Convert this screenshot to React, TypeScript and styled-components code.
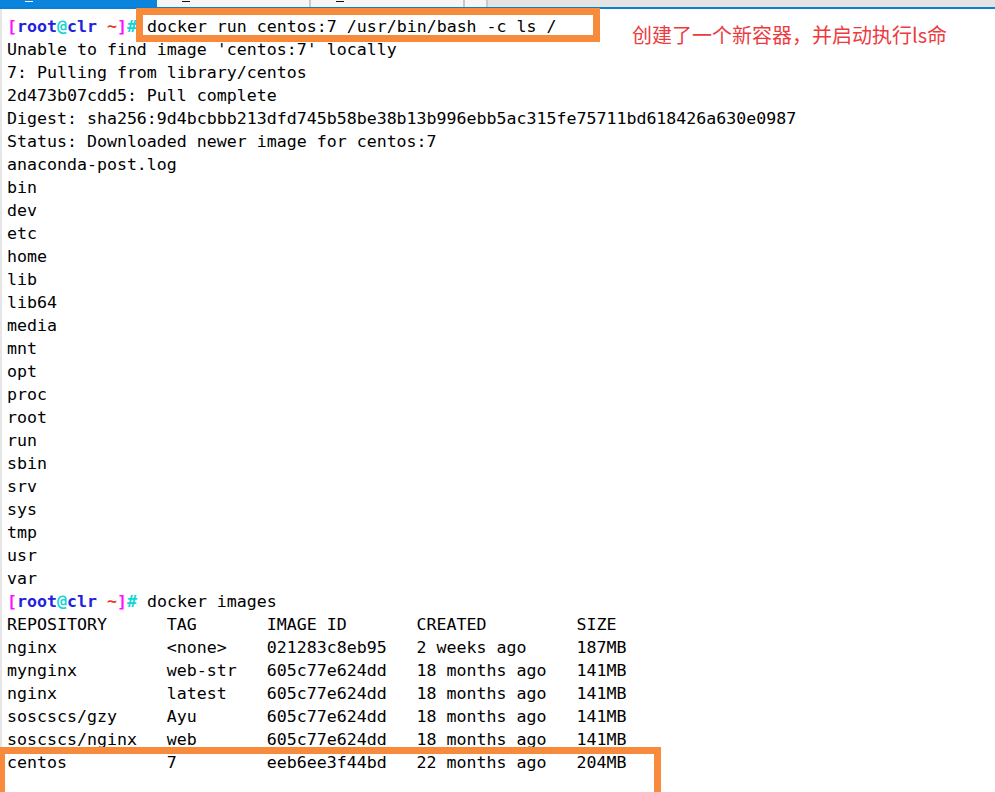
import React from 'react';
import styled, { createGlobalStyle } from 'styled-components';

const GlobalStyle = createGlobalStyle`
  html, body {
    margin: 0;
    padding: 0;
    background: #ffffff;
    overflow: hidden;
  }
`;

const Screen = styled.div`
  position: relative;
  width: 995px;
  height: 792px;
  overflow: hidden;
  background: #ffffff;
`;

const TabBar = styled.div`
  display: flex;
  height: 7px;
  background: #e4e4e4;
  border-bottom: 2px solid #0a7fd6;
`;

const Tab = styled.div<{ $active?: boolean; $width: number }>`
  position: relative;
  width: ${({ $width }) => $width}px;
  flex-shrink: 0;
  background: ${({ $active }) => ($active ? '#0a84dc' : '#f6f6f6')};
  border-right: 2px solid ${({ $active }) => ($active ? '#0a84dc' : '#c9c9c9')};

  &::after {
    content: '';
    position: absolute;
    left: 25px;
    top: 1px;
    width: 8px;
    height: 1px;
    background: ${({ $active }) => ($active ? '#ffffff' : '#111111')};
    display: ${({ $width }) => ($width < 40 ? 'none' : 'block')};
  }
`;

const Terminal = styled.pre`
  margin: 0;
  padding: 6px 0 0 5px;
  border-left: 2px solid #e6e6e6;
  height: 100%;
  font-family: 'DejaVu Sans Mono', 'Liberation Mono', monospace;
  font-size: 16.6px;
  line-height: 23px;
  color: #000000;
  white-space: pre;
`;

const Line = styled.div`
  height: 23px;
`;

const PromptPart = styled.span<{ $color: string }>`
  font-weight: bold;
  color: ${({ $color }) => $color};
`;

const Highlight = styled.div<{ $left: number; $top: number; $width: number; $height: number }>`
  position: absolute;
  left: ${({ $left }) => $left}px;
  top: ${({ $top }) => $top}px;
  width: ${({ $width }) => $width}px;
  height: ${({ $height }) => $height}px;
  box-sizing: border-box;
  border: 7px solid #f78a3b;
  z-index: 2;
`;

const Note = styled.div`
  position: absolute;
  left: 632px;
  top: 24px;
  font-family: 'Noto Sans CJK SC', 'Noto Sans', sans-serif;
  font-size: 20px;
  line-height: 22px;
  color: #ec3b3f;
  white-space: nowrap;
  z-index: 2;
`;

const Prompt: React.FC = () => (
  <>
    <PromptPart $color="#ff10ff">[</PromptPart>
    <PromptPart $color="#2222dd">root</PromptPart>
    <PromptPart $color="#10d6d6">@</PromptPart>
    <PromptPart $color="#2222dd">clr</PromptPart>
    <PromptPart $color="#e53a2a"> ~</PromptPart>
    <PromptPart $color="#ff10ff">]</PromptPart>
    <PromptPart $color="#10d6d6">#</PromptPart>
  </>
);

const output = [
  "Unable to find image 'centos:7' locally",
  '7: Pulling from library/centos',
  '2d473b07cdd5: Pull complete',
  'Digest: sha256:9d4bcbbb213dfd745b58be38b13b996ebb5ac315fe75711bd618426a630e0987',
  'Status: Downloaded newer image for centos:7',
  'anaconda-post.log',
  'bin',
  'dev',
  'etc',
  'home',
  'lib',
  'lib64',
  'media',
  'mnt',
  'opt',
  'proc',
  'root',
  'run',
  'sbin',
  'srv',
  'sys',
  'tmp',
  'usr',
  'var',
];

const images = [
  ['REPOSITORY', 'TAG', 'IMAGE ID', 'CREATED', 'SIZE'],
  ['nginx', '<none>', '021283c8eb95', '2 weeks ago', '187MB'],
  ['mynginx', 'web-str', '605c77e624dd', '18 months ago', '141MB'],
  ['nginx', 'latest', '605c77e624dd', '18 months ago', '141MB'],
  ['soscscs/gzy', 'Ayu', '605c77e624dd', '18 months ago', '141MB'],
  ['soscscs/nginx', 'web', '605c77e624dd', '18 months ago', '141MB'],
  ['centos', '7', 'eeb6ee3f44bd', '22 months ago', '204MB'],
];

const widths = [16, 10, 15, 16, 0];

const formatRow = (row: string[]) =>
  row.map((cell, i) => (widths[i] ? cell.padEnd(widths[i], ' ') : cell)).join('');

const App: React.FC = () => {
  return (
    <Screen>
      <GlobalStyle />
      <TabBar>
        <Tab $active $width={155} />
        <Tab $width={152} />
        <Tab $width={152} />
        <Tab $width={21} />
      </TabBar>
      <Terminal>
        <Line>
          <Prompt /> docker run centos:7 /usr/bin/bash -c ls /
        </Line>
        {output.map((text, i) => (
          <Line key={i}>{text}</Line>
        ))}
        <Line>
          <Prompt /> docker images
        </Line>
        {images.map((row, i) => (
          <Line key={'img' + i}>{formatRow(row)}</Line>
        ))}
      </Terminal>
      <Highlight $left={136} $top={8} $width={464} $height={34} />
      <Highlight $left={-2} $top={747} $width={663} $height={60} />
      <Note>创建了一个新容器，并启动执行ls命</Note>
    </Screen>
  );
};

export default App;
